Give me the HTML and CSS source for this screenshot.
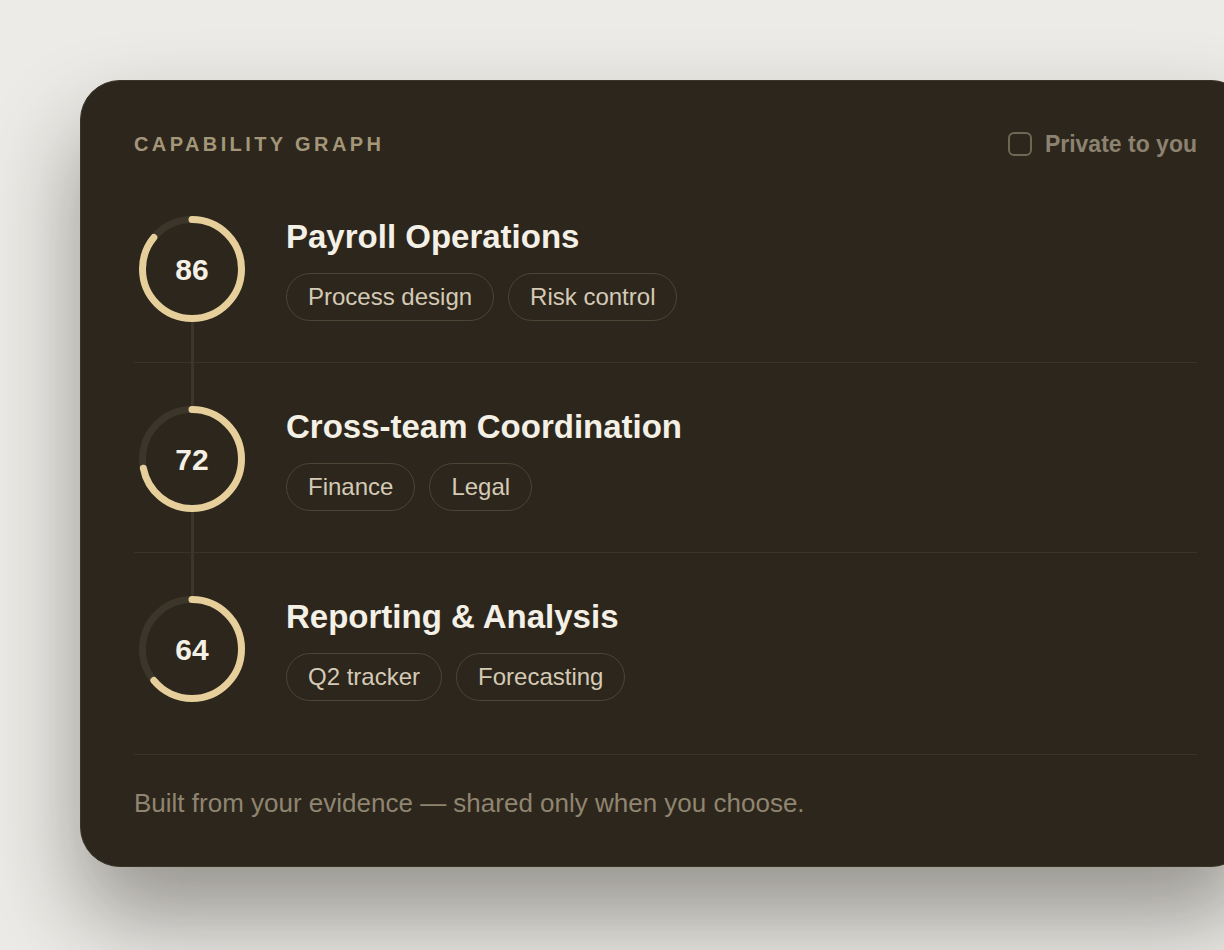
FILE: index.html
```html
<!DOCTYPE html>
<html lang="en">
<head>
  <meta charset="UTF-8">
  <title>Capability Graph</title>
  <meta name="viewport" content="width=device-width, initial-scale=1">
  <link rel="stylesheet" href="styles.css">
</head>
<body>

  <!-- Card principale -->
  <section class="card">
    <header class="card-head">
      <h2 class="eyebrow">CAPABILITY GRAPH</h2>
      <label class="private">
        <span class="box"></span>
        Private to you
      </label>
    </header>

    <div class="rows">
      <div class="row">
        <div class="ring">
          <svg width="116" height="116" viewBox="0 0 116 116">
            <circle class="track" cx="58" cy="58" r="49.5"></circle>
            <circle class="arc" cx="58" cy="58" r="49.5" pathLength="100" stroke-dasharray="86 100" transform="rotate(-90 58 58)"></circle>
          </svg>
          <span class="score">86</span>
        </div>
        <div class="info">
          <h3>Payroll Operations</h3>
          <div class="chips">
            <span class="chip">Process design</span>
            <span class="chip">Risk control</span>
          </div>
        </div>
      </div>

      <div class="row">
        <div class="ring">
          <svg width="116" height="116" viewBox="0 0 116 116">
            <circle class="track" cx="58" cy="58" r="49.5"></circle>
            <circle class="arc" cx="58" cy="58" r="49.5" pathLength="100" stroke-dasharray="72 100" transform="rotate(-90 58 58)"></circle>
          </svg>
          <span class="score">72</span>
        </div>
        <div class="info">
          <h3>Cross-team Coordination</h3>
          <div class="chips">
            <span class="chip">Finance</span>
            <span class="chip">Legal</span>
          </div>
        </div>
      </div>

      <div class="row">
        <div class="ring">
          <svg width="116" height="116" viewBox="0 0 116 116">
            <circle class="track" cx="58" cy="58" r="49.5"></circle>
            <circle class="arc" cx="58" cy="58" r="49.5" pathLength="100" stroke-dasharray="64 100" transform="rotate(-90 58 58)"></circle>
          </svg>
          <span class="score">64</span>
        </div>
        <div class="info">
          <h3>Reporting &amp; Analysis</h3>
          <div class="chips">
            <span class="chip">Q2 tracker</span>
            <span class="chip">Forecasting</span>
          </div>
        </div>
      </div>
    </div>

    <p class="foot">Built from your evidence — shared only when you choose.</p>
  </section>

</body>
</html>
```

FILE: styles.css
```css
/* Pagina */
body {
  margin: 0;
  min-height: 950px;
  background: #ecebe7;
  font-family: "Liberation Sans", Arial, sans-serif;
  overflow: hidden;
}

/* Card scura */
.card {
  box-sizing: border-box;
  width: 1171px;
  margin: 80px 0 0 80px;
  padding: 51px 53px 50px;
  background: #2d261c;
  border: 1px solid #3a3326;
  border-radius: 40px;
  box-shadow: 0 50px 90px rgba(30, 26, 20, 0.42);
}

.card-head {
  display: flex;
  align-items: center;
  justify-content: space-between;
  height: 24px;
  margin-bottom: 15px;
}

.eyebrow {
  margin: 0;
  font-size: 20px;
  font-weight: bold;
  letter-spacing: 3.4px;
  color: #a39679;
}

.private {
  display: flex;
  align-items: center;
  gap: 13px;
  font-size: 23px;
  font-weight: bold;
  color: #8c8270;
}

.private .box {
  width: 20px;
  height: 20px;
  border: 2px solid #6f6654;
  border-radius: 6px;
}

/* Righe */
.row {
  display: flex;
  align-items: center;
  gap: 36px;
  padding: 43px 0 40px;
  border-bottom: 1px solid #3a3328;
}

.row:first-child {
  padding-top: 45px;
}

.row:last-child {
  padding-bottom: 52px;
}

.ring {
  position: relative;
  width: 116px;
  height: 116px;
  margin: -5px 0;
}

.ring svg {
  display: block;
}

/* Linea di collegamento tra gli anelli */
.row:not(:last-child) .ring::after {
  content: "";
  position: absolute;
  left: 57px;
  top: 111px;
  width: 3px;
  height: 84px;
  background: #3c352a;
}

.track {
  fill: none;
  stroke: #3c352a;
  stroke-width: 7;
}

.arc {
  fill: none;
  stroke: #e6cf9b;
  stroke-width: 7;
  stroke-linecap: round;
}

.score {
  position: absolute;
  inset: 0;
  padding-top: 2px;
  display: flex;
  align-items: center;
  justify-content: center;
  font-size: 30px;
  font-weight: bold;
  color: #f4f0e6;
}

.info h3 {
  margin: 0 0 17px;
  font-size: 33px;
  line-height: 38px;
  font-weight: bold;
  color: #f4f0e6;
}

.chips {
  display: flex;
  gap: 14px;
}

.chip {
  box-sizing: border-box;
  height: 48px;
  padding: 0 21px;
  display: flex;
  align-items: center;
  font-size: 24px;
  color: #d4cab5;
  border: 1.5px solid #4c4434;
  border-radius: 24px;
}

.foot {
  margin: 0;
  padding-top: 35px;
  font-size: 26px;
  line-height: 26px;
  color: #8f8570;
}
```
